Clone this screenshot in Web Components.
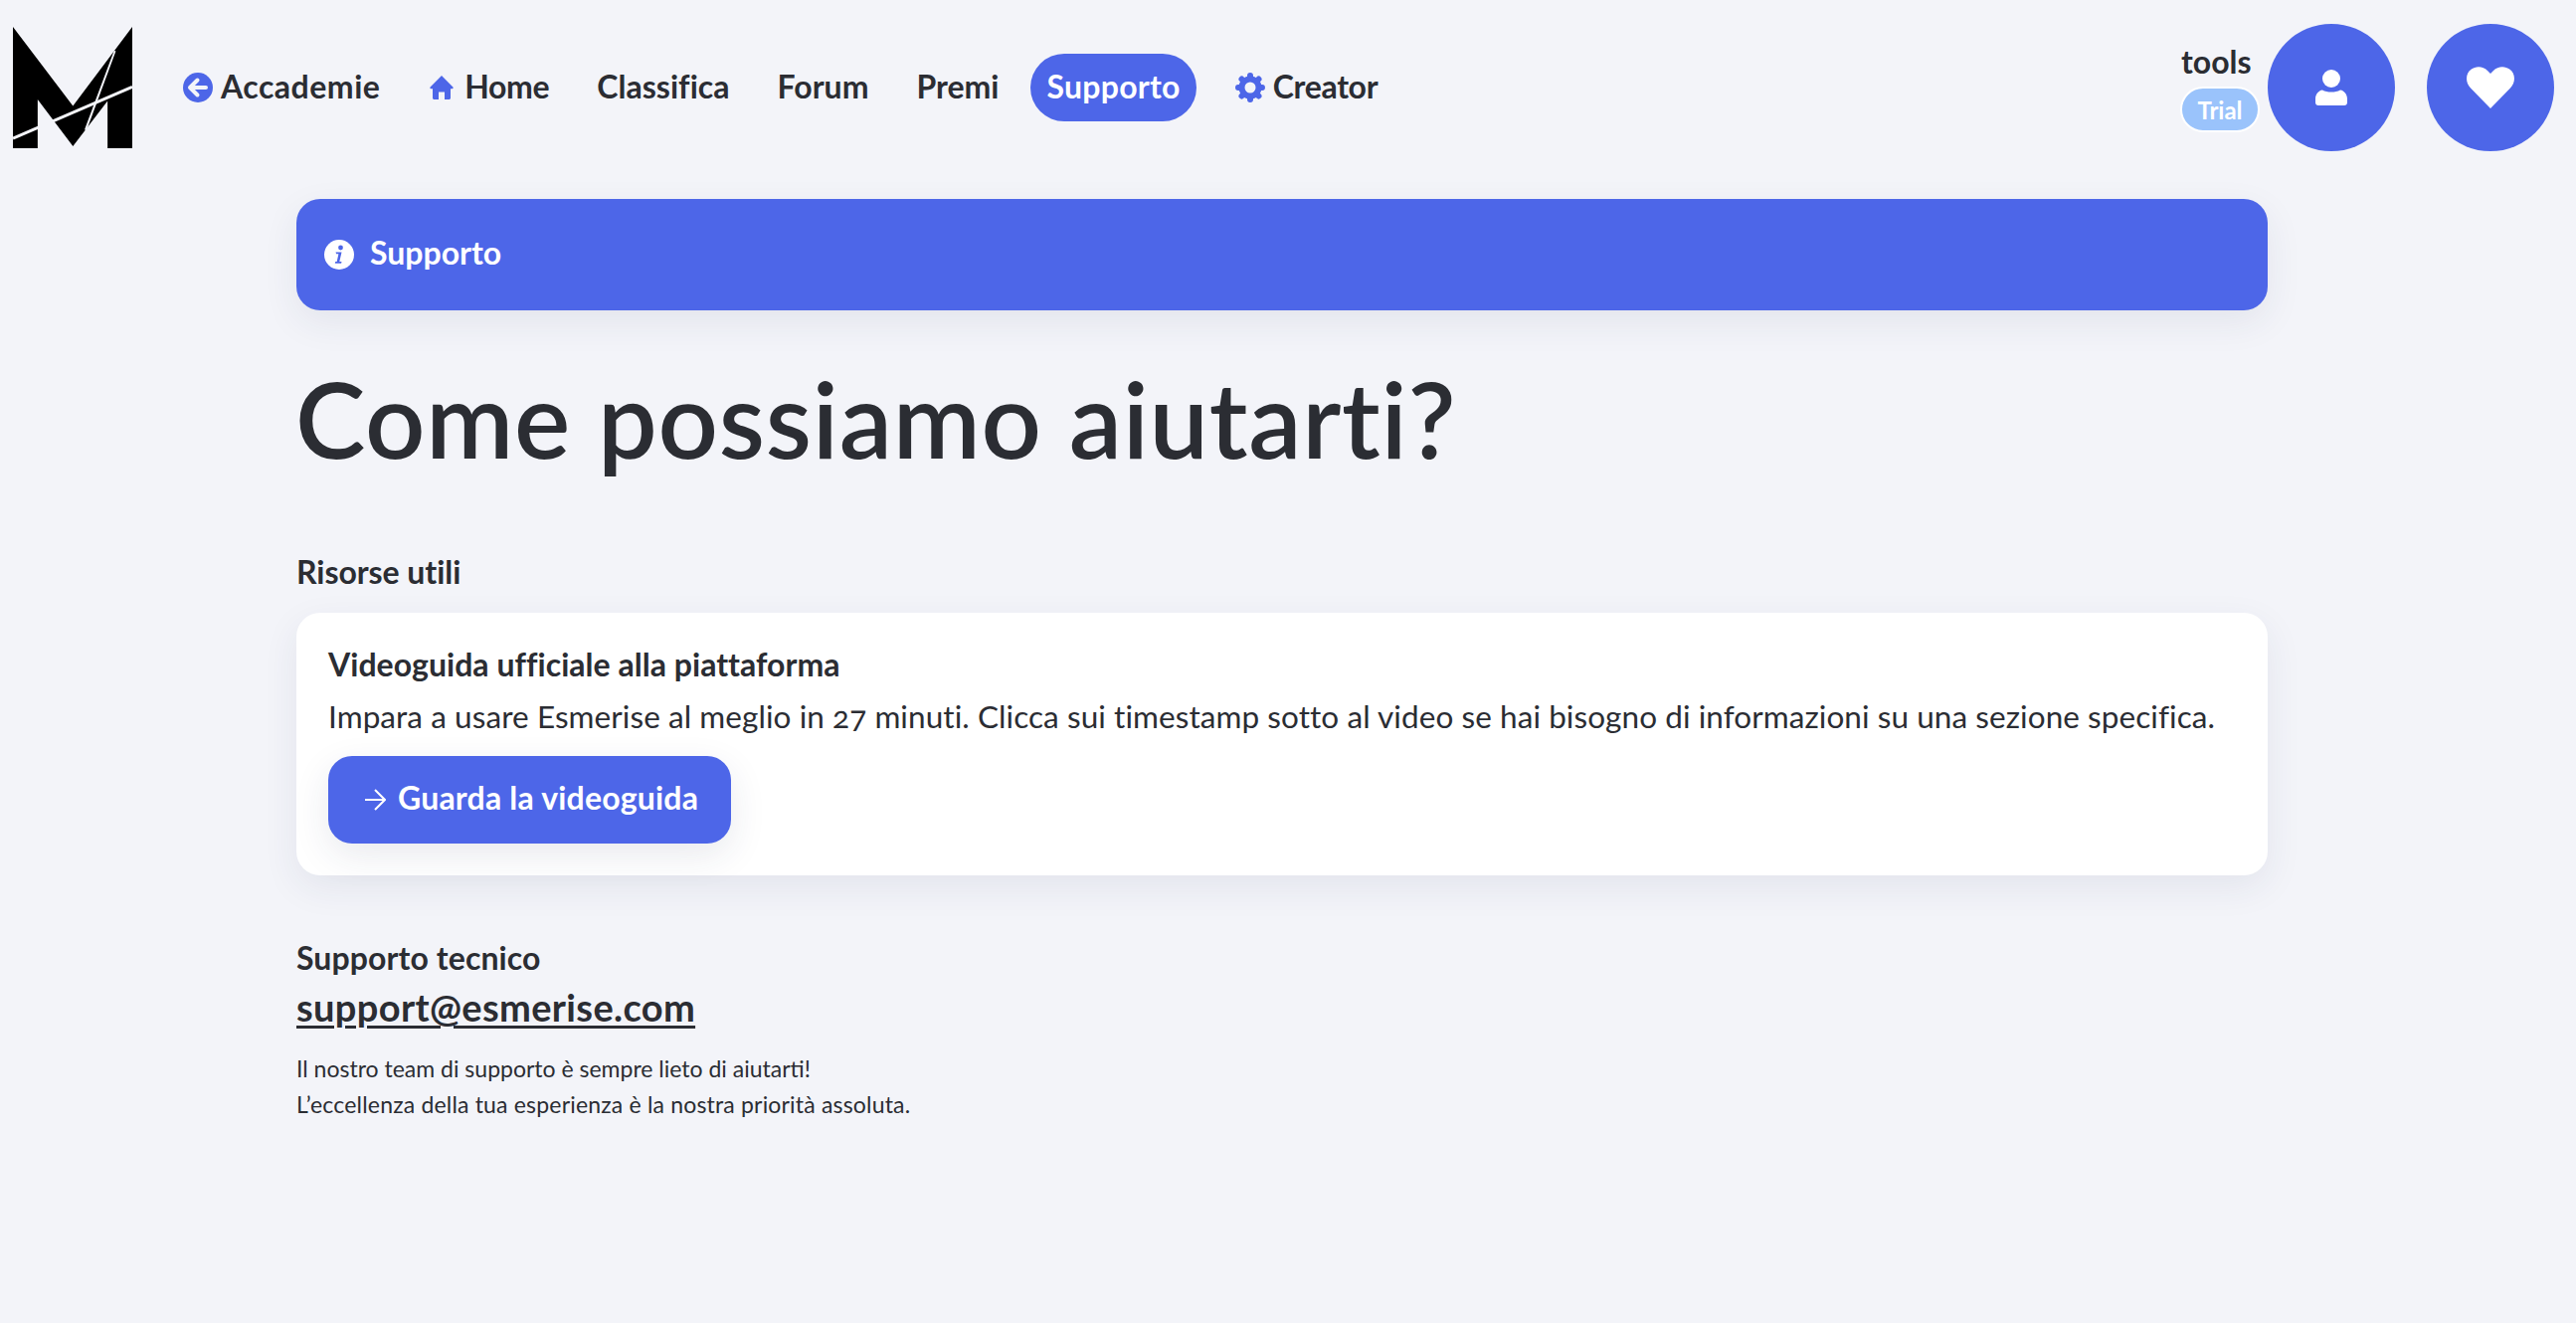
<!DOCTYPE html>
<html lang="it"><head><meta charset="utf-8"><title>Supporto</title>
<style>
html,body{margin:0;padding:0;background:#f3f4f9}
body{font-family:Lato,"Open Sans",sans-serif;color:#2b2d33;width:2590px;height:1330px;overflow:hidden;font-feature-settings:"onum"}
</style></head><body>
<es-page>
 <es-header slot="header">
  <es-logo slot="logo"></es-logo>
  <nav-link icon="back" ls="0.5" ig="8" ml="0">Accademie</nav-link>
  <nav-link icon="home" ls="-0.4" ig="11" ml="2">Home</nav-link>
  <nav-link ls="0.05">Classifica</nav-link>
  <nav-link ls="0">Forum</nav-link>
  <nav-link ls="0">Premi</nav-link>
  <nav-link active ls="0.25">Supporto</nav-link>
  <nav-link icon="gear" ls="-0.3" ig="8" ml="7">Creator</nav-link>
  <es-user slot="right" name="tools" plan="Trial"></es-user>
 </es-header>
 <es-alert>Supporto</es-alert>
 <es-title>Come possiamo aiutarti?</es-title>
 <es-label>Risorse utili</es-label>
 <es-card heading="Videoguida ufficiale alla piattaforma">
  Impara a usare Esmerise al meglio in 27 minuti. Clicca sui timestamp sotto al video se hai bisogno di informazioni su una sezione specifica.
  <es-button slot="action">Guarda la videoguida</es-button>
 </es-card>
 <es-contact email="support@esmerise.com" heading="Supporto tecnico">
  <span>Il nostro team di supporto è sempre lieto di aiutarti!</span>
  <span style="letter-spacing:.18px">L’eccellenza della tua esperienza è la nostra priorità assoluta.</span>
 </es-contact>
</es-page>
<script>
const ICONS={
 back:`<svg width="30" height="30" viewBox="0 0 30 30"><circle cx="15" cy="15" r="15" fill="#4d66e8"/><path d="M7 15h16M14.500 7.500 7 15l7.500 7.500" fill="none" stroke="#f3f4f9" stroke-width="4" stroke-linecap="round" stroke-linejoin="round"/></svg>`,
 home:`<svg width="24" height="24" viewBox="0 0 24 24"><path fill="#4d66e8" d="M12 0 23.400 11.600c.6.7.2 1.600-.7 1.600H21v9.300c0 .8-.7 1.500-1.500 1.500H15v-7.500H9V24H4.500C3.700 24 3 23.300 3 22.500V13.200H1.300c-.9 0-1.300-.9-.7-1.600Z"/></svg>`,
 gear:`<svg width="30" height="30" viewBox="0 0 30 30"><g stroke="#4d66e8" stroke-width="6" stroke-linecap="round"><path d="M15 3v24M3 15h24M6.500 6.500l17 17M23.500 6.500l-17 17"/></g><circle cx="15" cy="15" r="8.500" fill="#f3f4f9" stroke="#4d66e8" stroke-width="6"/></svg>`
};
function def(name,css,html){customElements.define(name,class extends HTMLElement{
 constructor(){super();this.attachShadow({mode:'open'})}
 connectedCallback(){this.shadowRoot.innerHTML=`<style>${css}</style>`+(typeof html==='function'?html(this):html)}
})}
def('es-page',`:host{display:block}
 main{display:flex;flex-direction:column;width:1982px;margin-left:298px}`,
 `<slot name="header"></slot><main><slot></slot></main>`);
def('es-header',`:host{display:flex;align-items:center;height:128px;padding:24px 22px 0 13px;margin-bottom:48px;box-sizing:content-box}
 .logo{margin-right:35px;display:flex}
 nav{display:flex;align-items:center;gap:16px}
 .right{margin-left:auto;display:flex}`,
 `<div class="logo"><slot name="logo"></slot></div><nav><slot></slot></nav><div class="right"><slot name="right"></slot></div>`);
def('es-logo',`:host{display:block;width:120px;height:124px}svg{display:block}`,
 `<svg width="120" height="124" viewBox="38 48 362 372" aria-label="Esmerise"><path fill="#000" d="M38 50 220 290 400 50V418H325V275L220 412 113 270V418H38Z"/><path d="M38 388 400 232" stroke="#f3f4f9" stroke-width="9" fill="none"/><path d="M345 122 350 124 262 362 255 362Z" fill="#f3f4f9"/></svg>`);
def('nav-link',`:host{display:flex;align-items:center;height:68px;padding:0 16px;border-radius:34px;font-size:32px;font-weight:700;white-space:nowrap}
 :host([active]){background:#4d66e8;color:#fff}
 svg{display:block}
 .t{position:relative;top:-2px}`,
 el=>{const i=el.getAttribute('icon');const ls=el.getAttribute('ls')||0;
 return (i?`<span style="display:flex;margin-left:${el.getAttribute('ml')}px;margin-right:${el.getAttribute('ig')}px">${ICONS[i]}</span>`:'')+`<span class="t" style="letter-spacing:${ls}px"><slot></slot></span>`});
def('es-user',`:host{display:flex;align-items:center;gap:32px}
 .who{display:flex;flex-direction:column;align-items:flex-start;gap:8px;margin-right:-24px}
 .name{font-size:32px;font-weight:700;line-height:36px;letter-spacing:0;margin-left:1px;position:relative;top:1px}
 .plan{background:#9ac3fb;color:#fff;border:2px solid #fff;border-radius:24px;height:46px;width:80px;box-sizing:border-box;display:flex;align-items:center;justify-content:center;font-size:24px;font-weight:700}
 .c{width:128px;height:128px;border-radius:50%;background:#4d66e8;display:flex;align-items:center;justify-content:center}`,
 el=>`<div class="who"><div class="name">${el.getAttribute('name')}</div><div class="plan">${el.getAttribute('plan')}</div></div>
 <div class="c"><svg width="32" height="36" viewBox="0 0 32 36"><circle cx="16" cy="9" r="9" fill="#fff"/><path fill="#fff" d="M7 20.500c2.500 1.500 5.500 2 9 2s6.500-.5 9-2c4 .5 7 4.500 7 9V33c0 1.700-1.300 3-3 3H3c-1.700 0-3-1.300-3-3v-3.500c0-4.500 3-8.500 7-9Z"/></svg></div>
 <div class="c"><svg width="48" height="42" viewBox="0 0 48 42"><path fill="#fff" d="M24 42 4 21.500C-1.500 16-1.200 7 4.500 2.800 9.500-1 16.500-.5 21 4l3 3 3-3c4.500-4.500 11.500-5 16.500-1.200C49.200 7 49.500 16 44 21.500Z"/></svg></div>`);
def('es-alert',`:host{display:flex;align-items:center;gap:16px;height:112px;padding:0 28px 0;box-sizing:border-box;background:#4d66e8;color:#fff;border-radius:24px;box-shadow:0 12px 36px rgba(40,45,90,.08);font-size:32px;font-weight:700;letter-spacing:0}
 svg{display:block}
 span{position:relative;top:-3px}`,
 `<svg width="30" height="30" viewBox="0 0 30 30"><circle cx="15" cy="15" r="15" fill="#fff"/><circle cx="16.500" cy="8" r="2.400" fill="#4d66e8"/><path fill="#4d66e8" d="M11.500 12.500h6l-2.200 9.500h2.200l-.4 1.800h-6.300l.4-1.800h1.500l1.700-7.700h-2.300Z"/></svg><span><slot></slot></span>`);
def('es-title',`:host{display:block;font-size:106px;font-weight:600;line-height:128px;margin-top:44px;letter-spacing:.7px;margin-left:-1px}`,`<slot></slot>`);
def('es-label',`:host{display:block;font-size:32px;font-weight:700;line-height:36px;margin-top:73px;letter-spacing:-.05px}`,`<slot></slot>`);
def('es-card',`:host{display:block;background:#fff;border-radius:24px;padding:32px 32px 32px;margin-top:23px;box-shadow:0 12px 36px rgba(40,45,90,.08);height:264px;box-sizing:border-box}
 h2{margin:0;font-size:32px;font-weight:700;line-height:42px;position:relative;top:-1px;letter-spacing:.03px}
 p{margin:10px 0 18px;font-size:31.5px;font-weight:400;line-height:42px;letter-spacing:.07px;white-space:nowrap;position:relative;top:-1px}`,
 el=>`<h2>${el.getAttribute('heading')}</h2><p><slot></slot></p><slot name="action"></slot>`);
def('es-button',`:host{display:inline-flex;align-items:center;gap:12px;width:405px;height:88px;padding-left:37px;box-sizing:border-box;background:#4d66e8;color:#fff;border-radius:24px;box-shadow:0 12px 36px rgba(40,45,90,.1);font-size:32px;font-weight:700;letter-spacing:.2px;white-space:nowrap}
 svg{display:block}
 span{position:relative;top:-3px}`,
 `<svg width="21" height="22" viewBox="0 0 21 22"><path d="M0 11h20M10 1l10 10-10 10" fill="none" stroke="#fff" stroke-width="2"/></svg><span><slot></slot></span>`);
def('es-contact',`:host{display:block;margin-top:65px}
 h3{margin:0;font-size:32px;font-weight:700;line-height:36px;letter-spacing:.1px}
 a{display:block;margin-top:7px;font-size:38px;font-weight:700;line-height:48px;color:inherit;text-decoration:underline;text-decoration-thickness:3px;text-underline-offset:4px;letter-spacing:.35px}
 .t{margin-top:20px;font-size:23px;line-height:36px;display:flex;flex-direction:column}
 ::slotted(span){display:block}`,
 el=>`<h3>${el.getAttribute('heading')}</h3><a href="#">${el.getAttribute('email')}</a><div class="t"><slot></slot></div>`);
</script>
</body></html>
